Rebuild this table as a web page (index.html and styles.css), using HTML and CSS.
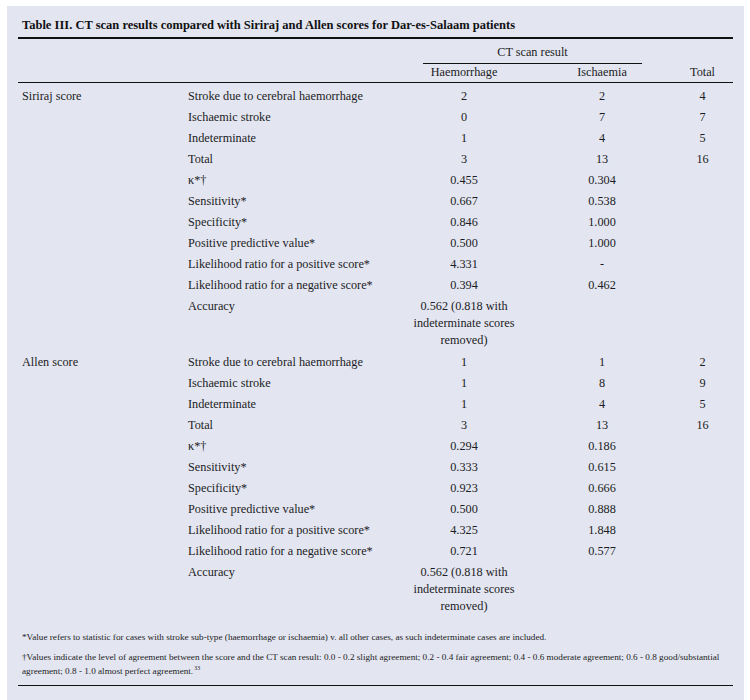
FILE: index.html
```html
<!DOCTYPE html>
<html>
<head>
<meta charset="utf-8">
<link rel="stylesheet" href="styles.css">
</head>
<body>
<div class="panel">
  <h1 class="title">Table III. CT scan results compared with Siriraj and Allen scores for Dar-es-Salaam patients</h1>
  <table class="data">
    <colgroup>
      <col class="c1"><col class="c2"><col class="c3"><col class="c4"><col class="c5">
    </colgroup>
    <thead>
      <tr class="h1">
        <th></th><th></th>
        <th colspan="2"><span class="span-head">CT scan result</span></th>
        <th></th>
      </tr>
      <tr class="h2">
        <th></th><th></th>
        <th class="num">Haemorrhage</th>
        <th class="num">Ischaemia</th>
        <th class="num tot">Total</th>
      </tr>
    </thead>
    <tbody>
      <tr class="first"><td class="grp">Siriraj score</td><td>Stroke due to cerebral haemorrhage</td><td class="num">2</td><td class="num">2</td><td class="num tot">4</td></tr>
      <tr><td></td><td>Ischaemic stroke</td><td class="num">0</td><td class="num">7</td><td class="num tot">7</td></tr>
      <tr><td></td><td>Indeterminate</td><td class="num">1</td><td class="num">4</td><td class="num tot">5</td></tr>
      <tr><td></td><td>Total</td><td class="num">3</td><td class="num">13</td><td class="num tot">16</td></tr>
      <tr><td></td><td>κ*†</td><td class="num">0.455</td><td class="num">0.304</td><td></td></tr>
      <tr><td></td><td>Sensitivity*</td><td class="num">0.667</td><td class="num">0.538</td><td></td></tr>
      <tr><td></td><td>Specificity*</td><td class="num">0.846</td><td class="num">1.000</td><td></td></tr>
      <tr><td></td><td>Positive predictive value*</td><td class="num">0.500</td><td class="num">1.000</td><td></td></tr>
      <tr><td></td><td>Likelihood ratio for a positive score*</td><td class="num">4.331</td><td class="num">-</td><td></td></tr>
      <tr><td></td><td>Likelihood ratio for a negative score*</td><td class="num">0.394</td><td class="num">0.462</td><td></td></tr>
      <tr><td></td><td>Accuracy</td><td class="num">0.562 (0.818 with indeterminate scores removed)</td><td></td><td></td></tr>
      <tr><td class="grp">Allen score</td><td>Stroke due to cerebral haemorrhage</td><td class="num">1</td><td class="num">1</td><td class="num tot">2</td></tr>
      <tr><td></td><td>Ischaemic stroke</td><td class="num">1</td><td class="num">8</td><td class="num tot">9</td></tr>
      <tr><td></td><td>Indeterminate</td><td class="num">1</td><td class="num">4</td><td class="num tot">5</td></tr>
      <tr><td></td><td>Total</td><td class="num">3</td><td class="num">13</td><td class="num tot">16</td></tr>
      <tr><td></td><td>κ*†</td><td class="num">0.294</td><td class="num">0.186</td><td></td></tr>
      <tr><td></td><td>Sensitivity*</td><td class="num">0.333</td><td class="num">0.615</td><td></td></tr>
      <tr><td></td><td>Specificity*</td><td class="num">0.923</td><td class="num">0.666</td><td></td></tr>
      <tr><td></td><td>Positive predictive value*</td><td class="num">0.500</td><td class="num">0.888</td><td></td></tr>
      <tr><td></td><td>Likelihood ratio for a positive score*</td><td class="num">4.325</td><td class="num">1.848</td><td></td></tr>
      <tr><td></td><td>Likelihood ratio for a negative score*</td><td class="num">0.721</td><td class="num">0.577</td><td></td></tr>
      <tr><td></td><td>Accuracy</td><td class="num">0.562 (0.818 with indeterminate scores removed)</td><td></td><td></td></tr>
    </tbody>
  </table>
  <div class="notes">
    <p>*Value refers to statistic for cases with stroke sub-type (haemorrhage or ischaemia) v. all other cases, as such indeterminate cases are included.</p>
    <p>†Values indicate the level of agreement between the score and the CT scan result: 0.0 - 0.2 slight agreement; 0.2 - 0.4 fair agreement; 0.4 - 0.6 moderate agreement; 0.6 - 0.8 good/substantial agreement; 0.8 - 1.0 almost perfect agreement.<sup class="ref">33</sup></p>
  </div>
</div>
</body>
</html>
```

FILE: styles.css
```css
html, body {
  margin: 0;
  padding: 0;
  background: #ffffff;
}

body {
  font-family: "Liberation Serif", "Times New Roman", serif;
  color: #1c1c24;
}

.panel {
  margin: 6px 0 0 7px;
  width: 737px;
  min-height: 694px;
  box-sizing: border-box;
  background: #e3e6f1;
  padding: 11px 11px 0 11px;
}

.title {
  margin: 0;
  padding: 0 0 4px 4px;
  font-size: 12.5px;
  line-height: 16px;
  font-weight: bold;
  color: #111;
  border-bottom: 2px solid #111;
}

.data {
  width: 715px;
  table-layout: fixed;
  border-collapse: collapse;
  font-size: 12.25px;
  line-height: 17px;
}

.c1 { width: 170px; }
.c2 { width: 222px; }
.c3 { width: 108px; }
.c4 { width: 168px; }
.c5 { width: 47px; }

.data th {
  font-weight: normal;
  padding: 0;
}

.h1 th {
  padding: 4.5px 0 0 0;
}

.span-head {
  display: block;
  margin: 0 44px 0 13px;
  padding-bottom: 2.5px;
  border-bottom: 1px solid #111;
  text-align: center;
}

.h2 th {
  padding: 0 0 1px 0;
  border-bottom: 1px solid #111;
}

.data td {
  padding: 2.05px 0;
  vertical-align: top;
}

.data tr.first td {
  padding-top: 4.5px;
}

.data .grp {
  padding-left: 4px;
}

.data .num {
  text-align: center;
}

.data .tot {
  padding-right: 14px;
}

.notes {
  margin-top: 12px;
  padding: 0 0 7px 4px;
  border-bottom: 1px solid #111;
  font-size: 9.2px;
  line-height: 14px;
}

.notes p {
  margin: 0 0 6px 0;
}

.notes p:last-child {
  margin-bottom: 0;
}

.notes .ref {
  font-size: 6px;
  line-height: 0;
  vertical-align: 4px;
  margin-left: 1px;
}
```
